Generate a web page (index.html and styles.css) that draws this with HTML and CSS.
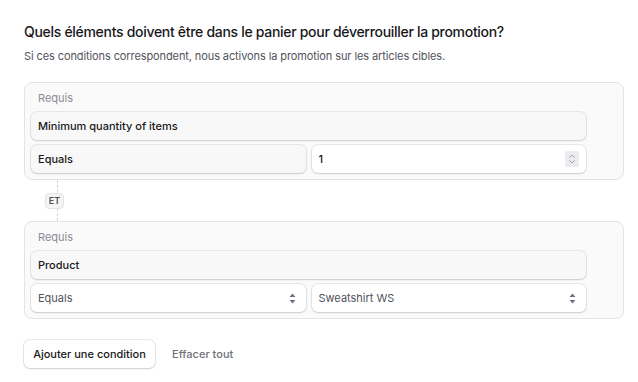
FILE: index.html
```html
<!DOCTYPE html>
<html lang="fr">
<head>
    <meta charset="UTF-8">
    <meta name="viewport" content="width=device-width, initial-scale=1.0">
    <title>Conditions de promotion</title>
    <link rel="stylesheet" href="styles.css">
</head>
<body>
    <div class="page">
        <h1 class="title">Quels éléments doivent être dans le panier pour déverrouiller la promotion?</h1>
        <p class="subtitle">Si ces conditions correspondent, nous activons la promotion sur les articles cibles.</p>

        <div class="rule-card">
            <div class="rule-label">Requis</div>
            <div class="field field-muted">Minimum quantity of items</div>
            <div class="field-row">
                <div class="field field-muted">Equals</div>
                <div class="field field-white">
                    <span>1</span>
                    <span class="spinner">
                        <svg width="8" height="12" viewBox="0 0 8 12" fill="none" stroke="#9ca3af" stroke-width="1" stroke-linecap="round" stroke-linejoin="round">
                            <path d="M1.5 4.5 L4 2 L6.5 4.5"/>
                            <path d="M1.5 7.5 L4 10 L6.5 7.5"/>
                        </svg>
                    </span>
                </div>
            </div>
        </div>

        <div class="connector">
            <span class="badge">ET</span>
        </div>

        <div class="rule-card">
            <div class="rule-label">Requis</div>
            <div class="field field-muted">Product</div>
            <div class="field-row">
                <div class="field field-white field-select">
                    <span>Equals</span>
                    <svg class="caret" width="7" height="11" viewBox="0 0 7 11" fill="#6b7280">
                        <path d="M3.5 0.5 L6.5 4 L0.5 4 Z"/>
                        <path d="M3.5 10.5 L6.5 7 L0.5 7 Z"/>
                    </svg>
                </div>
                <div class="field field-white field-select">
                    <span>Sweatshirt WS</span>
                    <svg class="caret" width="7" height="11" viewBox="0 0 7 11" fill="#6b7280">
                        <path d="M3.5 0.5 L6.5 4 L0.5 4 Z"/>
                        <path d="M3.5 10.5 L6.5 7 L0.5 7 Z"/>
                    </svg>
                </div>
            </div>
        </div>

        <div class="actions">
            <button class="btn-secondary">Ajouter une condition</button>
            <button class="btn-link">Effacer tout</button>
        </div>
    </div>
</body>
</html>
```

FILE: styles.css
```css
body {
    margin: 0;
    background-color: #ffffff;
    font-family: Inter, "Noto Sans", sans-serif;
    color: #18181b;
}
.page {
    padding: 22px 14px 20px 24px;
}
.title {
    margin: 0;
    font-size: 14px;
    line-height: 20px;
    font-weight: 500;
    letter-spacing: -0.3px;
    color: #18181b;
}
.subtitle {
    margin: 4px 0 0;
    font-size: 11px;
    line-height: 20px;
    letter-spacing: -0.1px;
    color: #52525b;
}
.rule-card {
    margin-top: 16px;
    background-color: #fafafa;
    border: 1px solid #e4e4e7;
    border-radius: 8px;
    padding: 5px 37px 6px 6px;
    display: flex;
    flex-direction: column;
    gap: 5px;
}
.connector + .rule-card {
    margin-top: 0;
}
.rule-label {
    font-size: 11px;
    line-height: 20px;
    color: #8b8b94;
    padding-left: 7px;
    margin-bottom: -1px;
}
.field {
    height: 28px;
    box-sizing: border-box;
    padding: 0 7px;
    border-radius: 6px;
    display: flex;
    align-items: center;
    justify-content: space-between;
    font-size: 11px;
    font-weight: 500;
    color: #18181b;
    box-shadow: 0 0 0 1px rgba(0, 0, 0, 0.07), 0 1px 2px rgba(0, 0, 0, 0.12);
}
.field-muted {
    background-color: #f8f8f8;
}
.field-white {
    background-color: #ffffff;
}
.field-select {
    color: #52525b;
    font-weight: 400;
    padding-right: 10px;
}
.field-row {
    display: grid;
    grid-template-columns: 1fr 1fr;
    gap: 6px;
}
.spinner {
    width: 14px;
    height: 16px;
    background-color: #ececef;
    border-radius: 2px;
    display: flex;
    align-items: center;
    justify-content: center;
}
.caret {
    display: block;
}
.connector {
    position: relative;
    height: 41px;
    display: flex;
    align-items: center;
    padding-left: 21px;
}
.connector::before {
    content: "";
    position: absolute;
    left: 33px;
    top: 0;
    bottom: 0;
    border-left: 1px dashed #d4d4d8;
}
.badge {
    position: relative;
    z-index: 1;
    width: 19px;
    height: 16px;
    box-sizing: border-box;
    display: flex;
    align-items: center;
    justify-content: center;
    background-color: #f4f4f5;
    border: 1px solid #e4e4e7;
    border-radius: 4px;
    font-size: 9px;
    font-weight: 600;
    color: #52525b;
}
.actions {
    margin-top: 21px;
    display: flex;
    align-items: center;
    gap: 6px;
}
.btn-secondary {
    height: 28px;
    width: 131px;
    padding: 0;
    border: none;
    border-radius: 6px;
    background-color: #ffffff;
    font-family: Inter, "Noto Sans", sans-serif;
    font-size: 11px;
    font-weight: 500;
    color: #18181b;
    box-shadow: 0 0 0 1px rgba(0, 0, 0, 0.08), 0 1px 2px rgba(0, 0, 0, 0.12);
    cursor: pointer;
}
.btn-link {
    height: 28px;
    padding: 0 11px;
    border: none;
    background: none;
    font-family: Inter, "Noto Sans", sans-serif;
    font-size: 11px;
    font-weight: 500;
    color: #71717a;
    cursor: pointer;
}
```
